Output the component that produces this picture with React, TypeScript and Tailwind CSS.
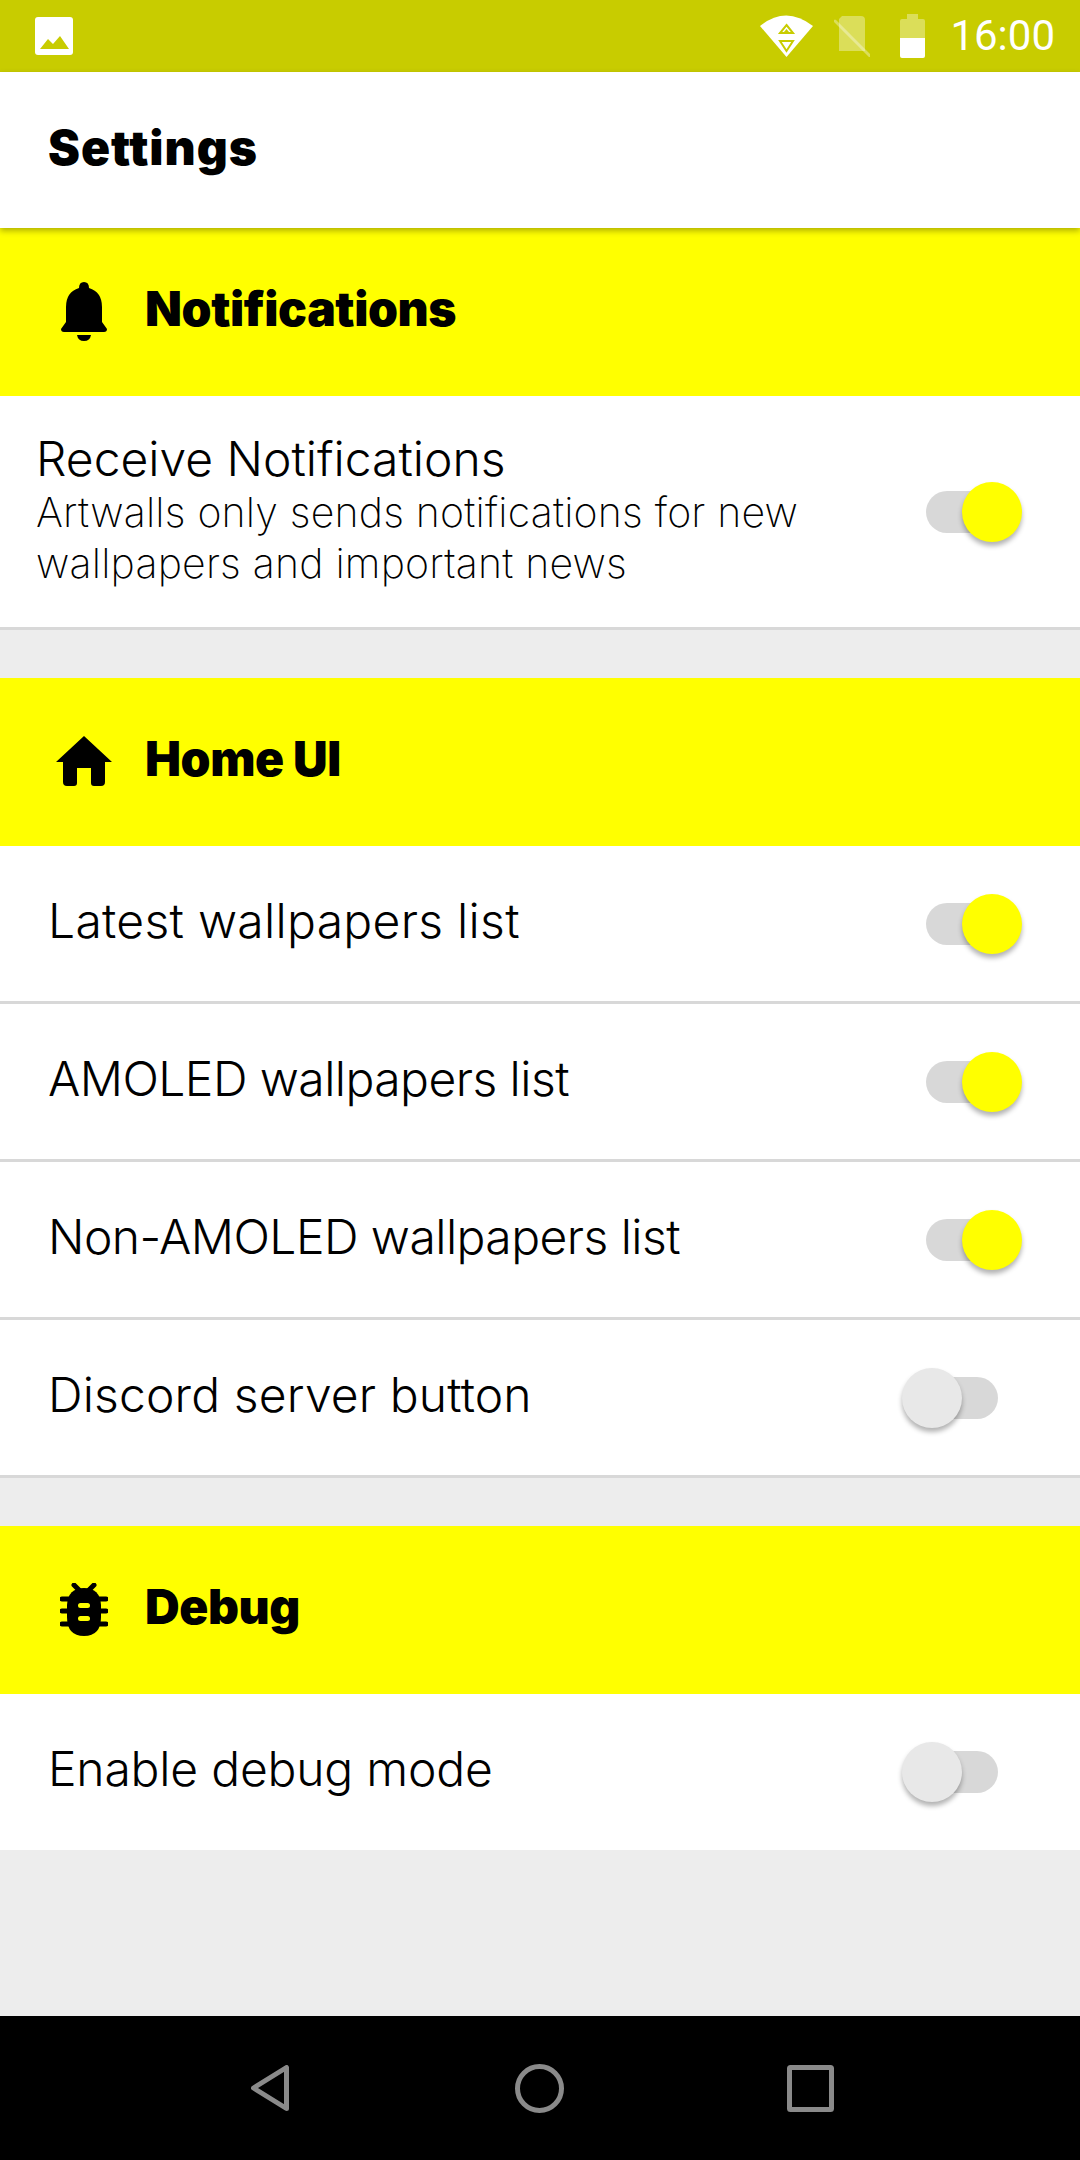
function Toggle({ on }: { on: boolean }) {
  return (
    <div className="relative w-[120px] h-[60px] shrink-0">
      <div className="absolute left-[24px] top-[9px] w-[72px] h-[42px] rounded-full bg-[#d8d8d8]" />
      {on ? (
        <div className="absolute left-[60px] top-0 w-[60px] h-[60px] rounded-full bg-[#ffff00] shadow-[0_4px_5px_rgba(0,0,0,0.3)]" />
      ) : (
        <div className="absolute left-0 top-0 w-[60px] h-[60px] rounded-full bg-[#e8e8e8] shadow-[0_4px_5px_rgba(0,0,0,0.3)]" />
      )}
    </div>
  );
}

function SectionHeader({ icon, title }: { icon: React.ReactNode; title: string }) {
  return (
    <div className="h-[168px] bg-[#ffff00] flex items-center shrink-0">
      <div className="w-[168px] h-full flex items-center justify-center shrink-0">{icon}</div>
      <span className="-ml-[23px] pb-[6px] text-[48px] font-black text-black font-['Inter',sans-serif] tracking-[-0.4px]">{title}</span>
    </div>
  );
}

function Row({ label, on, border = true, tracking }: { label: string; on: boolean; border?: boolean; tracking: string }) {
  return (
    <div className={`bg-white flex items-center justify-between pl-[48px] pr-[58px] shrink-0 ${border ? "h-[158px] border-b-[3px] border-[#d8d8d8]" : "h-[156px]"}`}>
      <span className={`pb-[6px] text-[48px] font-light text-black font-['Inter',sans-serif] ${tracking}`}>{label}</span>
      <Toggle on={on} />
    </div>
  );
}

export default function App() {
  return (
    <div className="w-[1080px] h-[2160px] flex flex-col bg-[#ededed] overflow-hidden">
      {/* Status bar */}
      <div className="h-[72px] bg-[#c8cc00] flex items-center shrink-0 pl-[35px] pr-[25px]">
        <svg width="38" height="38" viewBox="0 0 38 38">
          <rect width="38" height="38" rx="3" fill="#fff" />
          <path d="M5 32 L13 22 L18 27 L25 19 L34 32 Z" fill="#c8cc00" />
        </svg>
        <div className="ml-auto flex items-center">
          <svg width="53" height="42" viewBox="0 0 53 42">
            <path d="M0 11 Q26 -10 53 11 L26.5 42 Z" fill="#fff" />
            <path d="M26.5 10 L33 18 H20 Z M26.5 36 L20 26 H33 Z" fill="none" stroke="#c8cc00" strokeWidth="2" />
            <path d="M26.5 14 L29 17 H24 Z" fill="#c8cc00" />
          </svg>
          <svg className="ml-[21px]" width="36" height="42" viewBox="0 0 36 42">
            <path d="M8 1 H27 Q31 1 31 5 V36 H5 V4 Z" fill="#fff" fillOpacity="0.35" />
            <path d="M1 6 L36 41" stroke="#fff" strokeOpacity="0.35" strokeWidth="3" strokeLinecap="round" />
          </svg>
          <svg className="ml-[30px]" width="25" height="44" viewBox="0 0 25 44">
            <path d="M7 0 H18 V5 H23 Q25 5 25 7 V24 H0 V7 Q0 5 2 5 H7 Z" fill="#fff" fillOpacity="0.35" />
            <path d="M0 24 H25 V42 Q25 44 23 44 H2 Q0 44 0 42 Z" fill="#fff" />
          </svg>
          <span className="ml-[25px] text-[42px] leading-none text-white font-['Roboto',sans-serif]">16:00</span>
        </div>
      </div>

      {/* App bar */}
      <div className="relative z-10 h-[156px] bg-white flex items-center pl-[48px] shrink-0 shadow-[0_3px_6px_rgba(0,0,0,0.3)]">
        <span className="pb-[4px] text-[48px] font-black text-black font-['Inter',sans-serif] tracking-[1px]">Settings</span>
      </div>

      <SectionHeader
        title="Notifications"
        icon={
          <svg width="46" height="60" viewBox="0 0 46 60" fill="#000">
            <path d="M23 0 Q28 0 28 6 Q41 10 41 25 V40 L46 47 Q46 50 43 50 H3 Q0 50 0 47 L5 40 V25 Q5 10 18 6 Q18 0 23 0 Z" />
            <path d="M16 53 H30 Q29 59 23 59 Q17 59 16 53 Z" />
          </svg>
        }
      />

      <div className="h-[234px] bg-white border-b-[3px] border-[#d8d8d8] flex items-center justify-between pl-[36px] pr-[58px] font-['Inter',sans-serif] text-black shrink-0">
        <div className="pt-[1px]">
          <div className="text-[48px] font-light leading-[52px] -mt-[2px] mb-[2px]">Receive Notifications</div>
          <div className="text-[41px] font-extralight leading-[51px] w-[800px] tracking-[0.2px]">
            Artwalls only sends notifications for new wallpapers and important news
          </div>
        </div>
        <Toggle on />
      </div>

      <div className="h-[48px] shrink-0" />

      <SectionHeader
        title="Home UI"
        icon={
          <svg className="mb-[3px]" width="56" height="50" viewBox="0 0 56 50" fill="#000">
            <path d="M28 0 L56 26 H49 V46 Q49 50 45 50 H38 Q35 50 35 47 V32 H21 V47 Q21 50 18 50 H11 Q7 50 7 46 V26 H0 Z" />
          </svg>
        }
      />
      <Row label="Latest wallpapers list" on tracking="tracking-[0.3px]" />
      <Row label="AMOLED wallpapers list" on tracking="tracking-[-0.55px]" />
      <Row label="Non-AMOLED wallpapers list" on tracking="tracking-[-0.55px]" />
      <Row label="Discord server button" on={false} tracking="tracking-[0.15px]" />

      <div className="h-[48px] shrink-0" />

      <SectionHeader
        title="Debug"
        icon={
          <svg width="48" height="54" viewBox="0 0 48 54" fill="#000" stroke="#000">
            <path d="M14 2 L19 7 M34 2 L29 7 M2 16 H46 M2 28 H46 M2 41 H46" strokeWidth="5" strokeLinecap="round" />
            <path d="M24 5 Q40 5 41 22 V34 Q41 53 24 53 Q7 53 7 34 V22 Q8 5 24 5 Z" stroke="none" />
            <rect x="18" y="20" width="12" height="5" rx="2.5" fill="#ffff00" stroke="none" />
            <rect x="18" y="33" width="12" height="5" rx="2.5" fill="#ffff00" stroke="none" />
          </svg>
        }
      />
      <Row label="Enable debug mode" on={false} border={false} tracking="tracking-[-0.2px]" />

      <div className="flex-1" />

      {/* Nav bar */}
      <div className="h-[144px] bg-black flex items-center shrink-0">
        <svg className="ml-[251px]" width="38" height="46" viewBox="0 0 38 46" fill="none" stroke="#8a8a8a" strokeWidth="5" strokeLinejoin="round">
          <path d="M35.5 2.5 V43.5 L2.5 23 Z" />
        </svg>
        <svg className="ml-[226px]" width="49" height="49" viewBox="0 0 49 49" fill="none" stroke="#8a8a8a" strokeWidth="5">
          <circle cx="24.5" cy="24.5" r="22" />
        </svg>
        <svg className="ml-[223px]" width="47" height="47" viewBox="0 0 47 47" fill="none" stroke="#8a8a8a" strokeWidth="5" strokeLinejoin="round">
          <rect x="2.5" y="2.5" width="42" height="42" rx="1" />
        </svg>
      </div>
    </div>
  );
}
